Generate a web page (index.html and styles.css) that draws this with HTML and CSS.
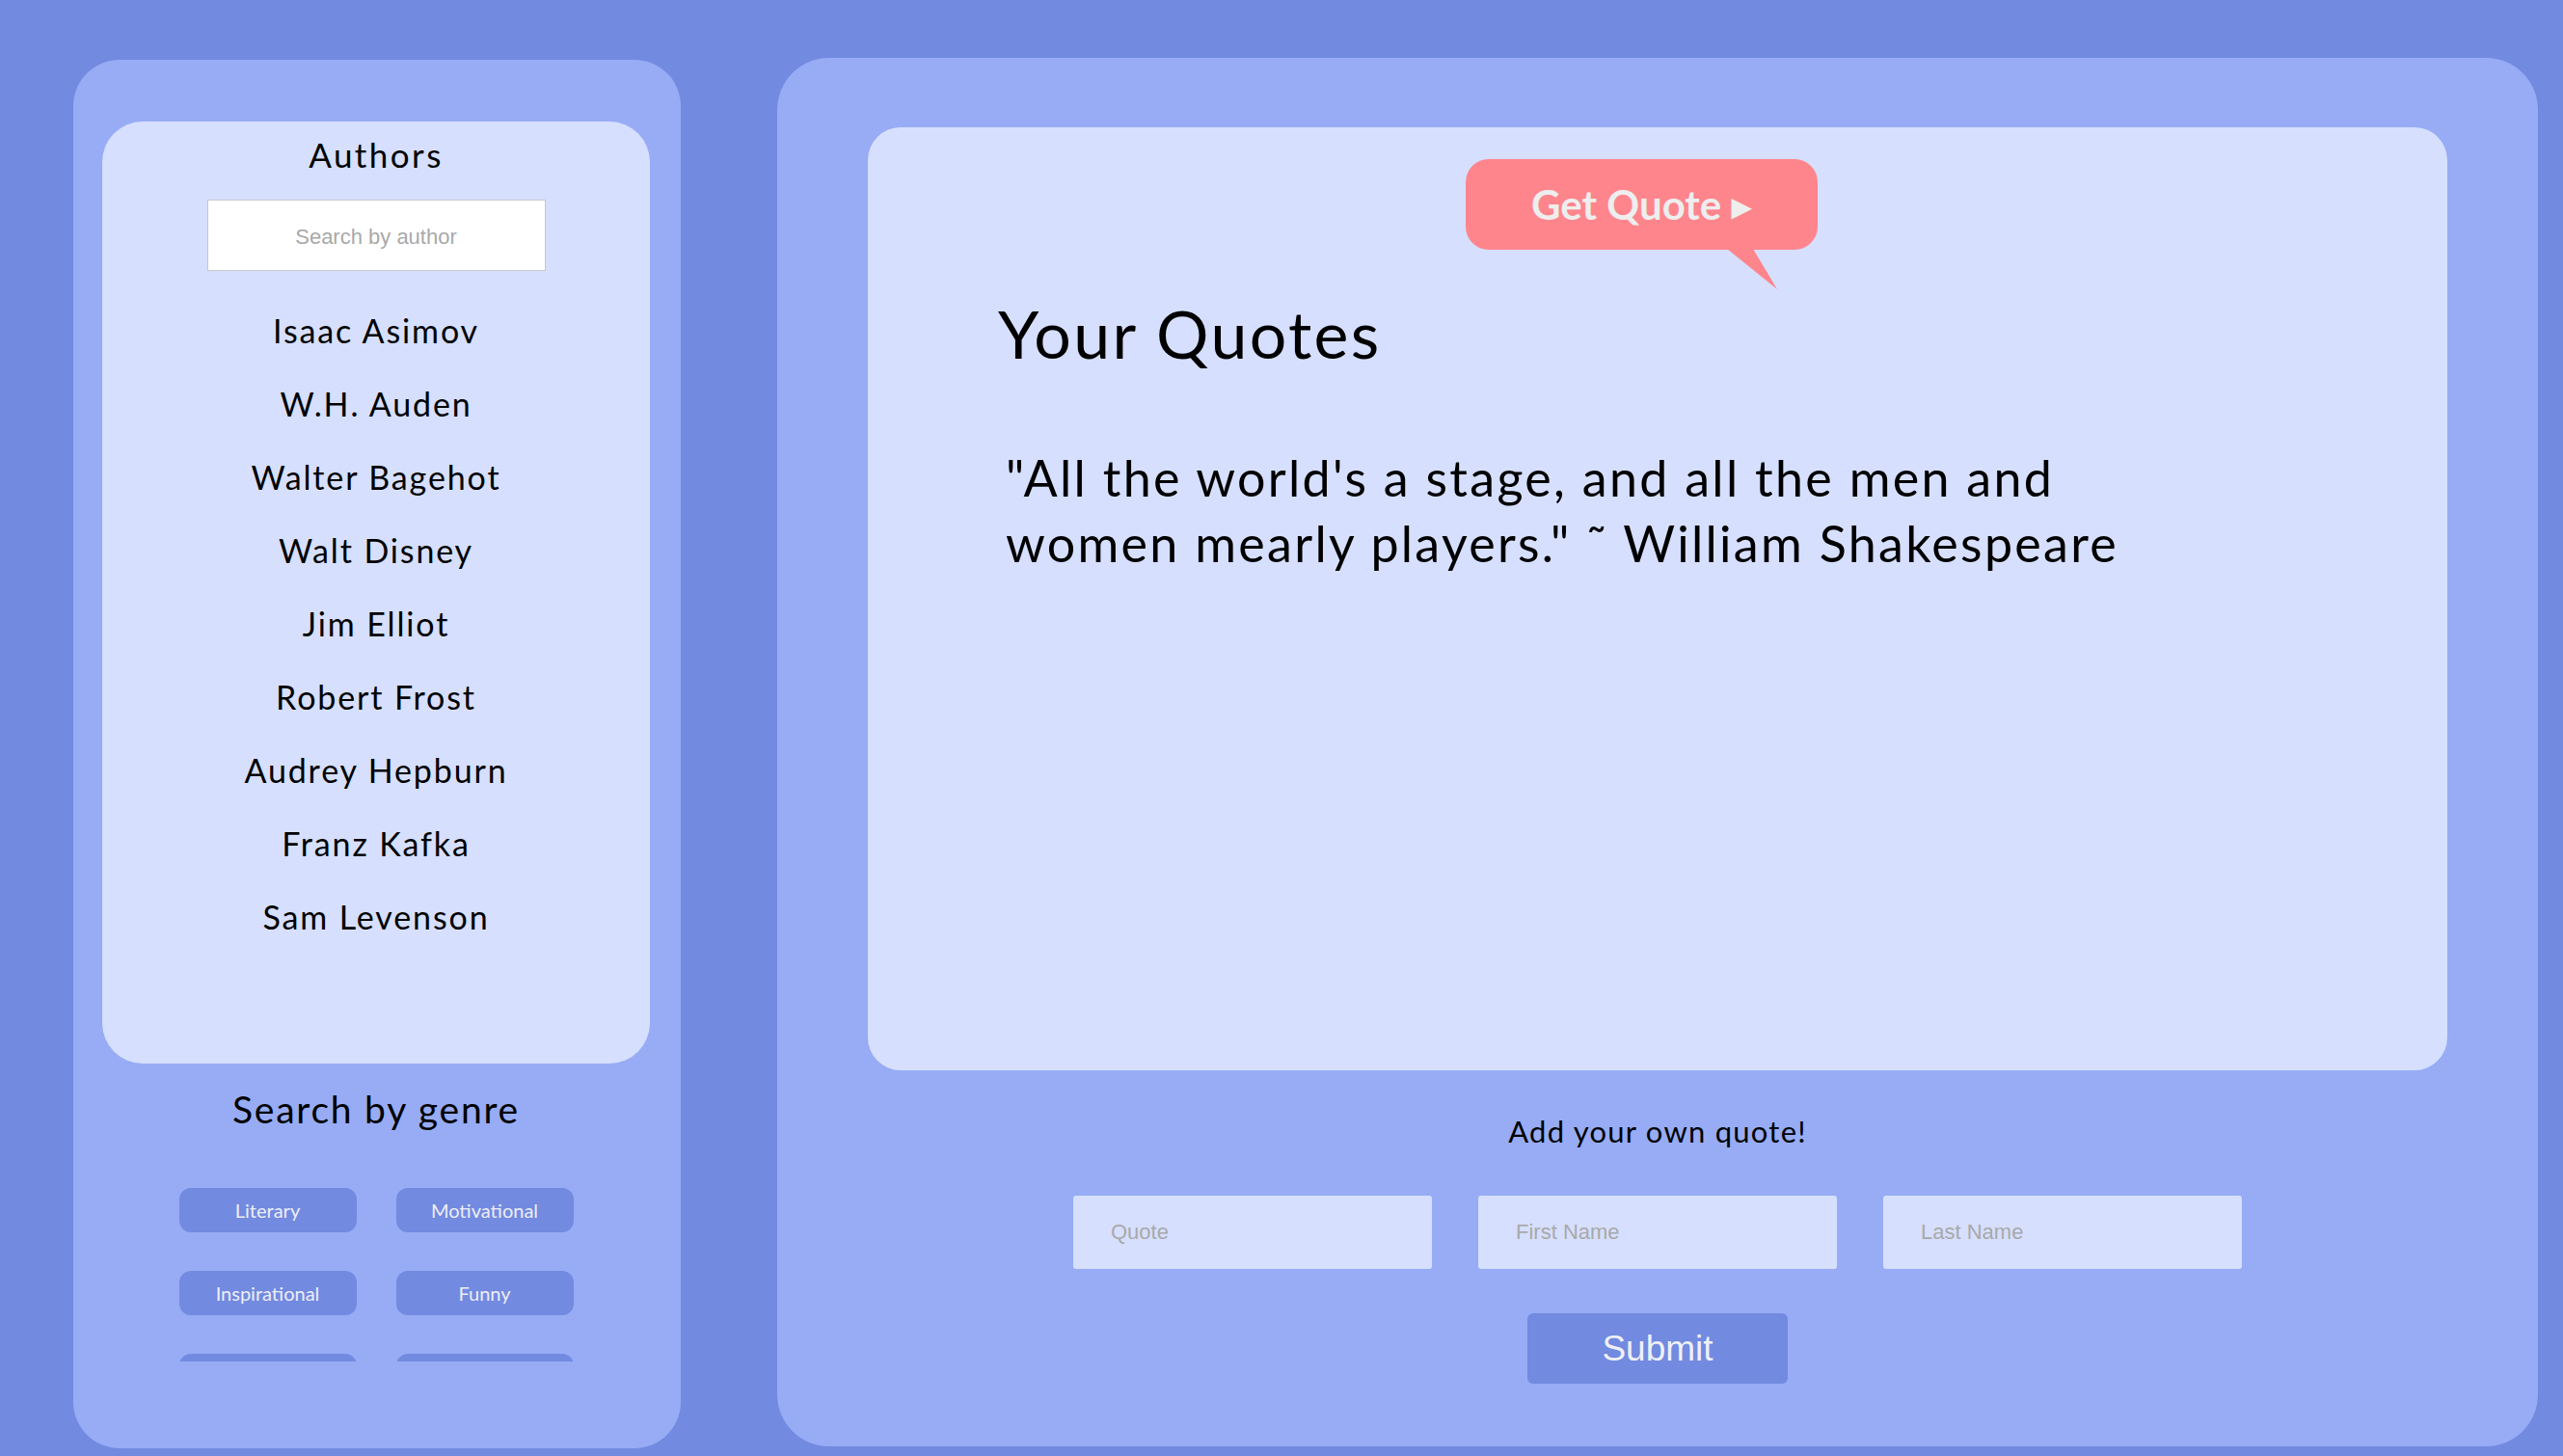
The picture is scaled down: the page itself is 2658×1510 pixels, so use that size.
FILE: index.html
```html
<!DOCTYPE html>
<html lang="en">
<head>
<meta charset="utf-8">
<title>Quotes</title>
<link rel="stylesheet" href="styles.css">
</head>
<body>
<div class="page">
  <aside class="sidebar">
    <section class="authors-card">
      <h2 class="authors-title">Authors</h2>
      <input class="author-search" type="text" placeholder="Search by author">
      <ul class="author-list">
        <li>Isaac Asimov</li>
        <li>W.H. Auden</li>
        <li>Walter Bagehot</li>
        <li>Walt Disney</li>
        <li>Jim Elliot</li>
        <li>Robert Frost</li>
        <li>Audrey Hepburn</li>
        <li>Franz Kafka</li>
        <li>Sam Levenson</li>
      </ul>
    </section>
    <h2 class="genre-title">Search by genre</h2>
    <div class="genre-grid">
      <button class="genre-btn">Literary</button>
      <button class="genre-btn">Motivational</button>
      <button class="genre-btn">Inspirational</button>
      <button class="genre-btn">Funny</button>
      <button class="genre-btn">Love</button>
      <button class="genre-btn">Wisdom</button>
    </div>
  </aside>
  <main class="main-panel">
    <section class="quote-card">
      <button class="get-quote">Get Quote <span class="arrow">&#9654;</span></button>
      <h1 class="quotes-title">Your Quotes</h1>
      <p class="quote-text">"All the world's a stage, and all the men and women mearly players." &#732; William Shakespeare</p>
    </section>
    <form class="add-form">
      <p class="add-title">Add your own quote!</p>
      <div class="add-fields">
        <input class="add-input" type="text" placeholder="Quote">
        <input class="add-input" type="text" placeholder="First Name">
        <input class="add-input" type="text" placeholder="Last Name">
      </div>
      <button class="submit-btn" type="button">Submit</button>
    </form>
  </main>
</div>
</body>
</html>
```
FILE: styles.css
```css
* { box-sizing: border-box; }
html, body { margin: 0; padding: 0; }
body {
  background: #728ae0;
  font-family: "Lato", "Noto Sans", sans-serif;
  color: #000;
  width: 2658px;
  height: 1510px;
  overflow: hidden;
}
.page {
  display: flex;
  align-items: flex-start;
  padding: 60px 0 0 76px;
  gap: 100px;
}

/* Sidebar */
.sidebar {
  margin-top: 2px;
  width: 630px;
  height: 1440px;
  background: #97acf5;
  border-radius: 48px;
  padding: 64px 32px 0 30px;
  display: flex;
  flex-direction: column;
  align-items: center;
}
.authors-card {
  width: 568px;
  height: 977px;
  background: #d6dffe;
  border-radius: 42px;
  display: flex;
  flex-direction: column;
  align-items: center;
  padding-top: 13px;
}
.authors-title {
  margin: 0;
  font-weight: 400;
  font-size: 35px;
  line-height: 42px;
  letter-spacing: 0.07em;
}
.author-search {
  margin-top: 26px;
  width: 351px;
  height: 74px;
  background: #fff;
  border: 1px solid #c8c8c8;
  text-align: center;
  padding-top: 4px;
  font-family: "Liberation Sans", Arial, sans-serif;
  font-size: 22px;
  color: #333;
  outline: none;
}
.author-search::placeholder { color: #a9a9a9; }
.author-list {
  list-style: none;
  margin: 24px 0 0;
  padding: 0;
  text-align: center;
}
.author-list li {
  font-size: 34px;
  line-height: 76px;
  letter-spacing: 0.055em;
}
.genre-title {
  margin: 24px 0 0;
  font-weight: 400;
  font-size: 39px;
  line-height: 47px;
  letter-spacing: 0.045em;
}
.genre-grid {
  margin-top: 58px;
  height: 180px;
  overflow: hidden;
  display: grid;
  grid-template-columns: 184px 184px;
  grid-auto-rows: 46px;
  column-gap: 41px;
  row-gap: 40px;
  justify-content: center;
}
.genre-btn {
  border: none;
  background: #728ae0;
  color: #eeeef6;
  border-radius: 12px;
  font-family: "Lato", "Noto Sans", sans-serif;
  font-size: 20px;
  padding: 0;
}

/* Main panel */
.main-panel {
  width: 1826px;
  height: 1440px;
  background: #97acf5;
  border-radius: 54px;
  padding: 72px 94px 0;
  display: flex;
  flex-direction: column;
  align-items: center;
}
.quote-card {
  width: 1638px;
  height: 978px;
  background: #d6dffe;
  border-radius: 34px;
  padding: 33px 0 0 135px;
  align-self: stretch;
}
.get-quote {
  position: relative;
  display: block;
  margin-left: 485px;
  width: 365px;
  height: 94px;
  border: none;
  border-radius: 24px;
  background: #ff858d;
  color: #eeeeee;
  font-family: "Lato", "DejaVu Sans", sans-serif;
  font-weight: 700;
  font-size: 42px;
  padding: 0;
}
.get-quote .arrow { font-size: 28px; vertical-align: 4px; }
.get-quote::after {
  content: "";
  position: absolute;
  left: 271px;
  top: 93px;
  width: 52px;
  height: 42px;
  background: #ff858d;
  clip-path: polygon(0 0, 27px 0, 52px 42px);
}
.quotes-title {
  margin: 46px 0 0;
  font-weight: 400;
  font-size: 68px;
  line-height: 82px;
  letter-spacing: 0.035em;
}
.quote-text {
  margin: 74px 0 0;
  max-width: 1200px;
  padding-left: 8px;
  font-size: 52px;
  line-height: 68px;
  letter-spacing: 0.044em;
}

.add-form {
  display: flex;
  flex-direction: column;
  align-items: center;
}
.add-title {
  margin: 45px 0 0;
  font-size: 31px;
  line-height: 37px;
  letter-spacing: 0.04em;
}
.add-fields {
  margin-top: 48px;
  display: flex;
  gap: 48px;
}
.add-input {
  width: 372px;
  height: 76px;
  border: none;
  border-radius: 3px;
  background: #d6dffe;
  padding: 0 0 0 39px;
  font-family: "Liberation Sans", Arial, sans-serif;
  font-size: 22px;
  outline: none;
}
.add-input::placeholder { color: #a9a9a9; }
.submit-btn {
  margin-top: 46px;
  width: 270px;
  height: 73px;
  border: none;
  border-radius: 6px;
  background: #728ae0;
  color: #f0f0f6;
  font-family: "Liberation Sans", Arial, sans-serif;
  font-size: 37px;
  padding: 0;
}
```
